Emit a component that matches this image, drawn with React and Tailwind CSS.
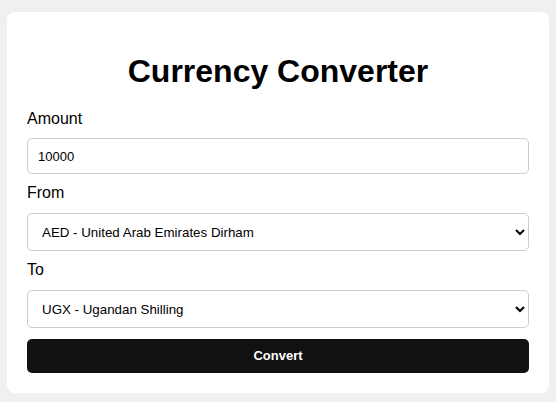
import { useState } from 'react';

export default function App() {
    const [amount, setAmount] = useState('10000');
    const [from, setFrom] = useState('AED');
    const [to, setTo] = useState('UGX');

    const currencies = [
        { code: 'AED', name: 'United Arab Emirates Dirham' },
        { code: 'USD', name: 'United States Dollar' },
        { code: 'EUR', name: 'Euro' },
        { code: 'UGX', name: 'Ugandan Shilling' }
    ];

    return (
        <div className="min-h-[402px] bg-[#f0f0f0] px-[7px] pt-[12px] pb-[9px] font-['Liberation_Sans',Arial,sans-serif] text-black">
            <div className="rounded-[8px] bg-white px-[20px] pt-[20px] pb-[20px]">
                <h1 className="mt-[21px] mb-[20px] text-center text-[32px] font-bold leading-[37px]">Currency Converter</h1>

                <label className="mb-[10px] block text-[16px] leading-[18px]">Amount</label>
                <input
                    type="text"
                    value={amount}
                    onChange={(e) => setAmount(e.target.value)}
                    className="block h-[36px] w-full rounded-[5px] border border-[#cccccc] px-[10px] text-[13px] outline-none"
                />

                <label className="mt-[10px] mb-[11px] block text-[16px] leading-[18px]">From</label>
                <select
                    value={from}
                    onChange={(e) => setFrom(e.target.value)}
                    className="block h-[38px] w-full rounded-[5px] border border-[#cccccc] bg-white px-[10px] text-[13.33px] outline-none"
                >
                    {currencies.map((c) => (
                        <option key={c.code} value={c.code}>{c.code} - {c.name}</option>
                    ))}
                </select>

                <label className="mt-[10px] mb-[11px] block text-[16px] leading-[18px]">To</label>
                <select
                    value={to}
                    onChange={(e) => setTo(e.target.value)}
                    className="block h-[38px] w-full rounded-[5px] border border-[#cccccc] bg-white px-[10px] text-[13.33px] outline-none"
                >
                    {currencies.map((c) => (
                        <option key={c.code} value={c.code}>{c.code} - {c.name}</option>
                    ))}
                </select>

                <button className="mt-[11px] block h-[34px] w-full rounded-[5px] bg-[#111111] text-[13px] font-bold text-white">
                    Convert
                </button>
            </div>
        </div>
    );
}
